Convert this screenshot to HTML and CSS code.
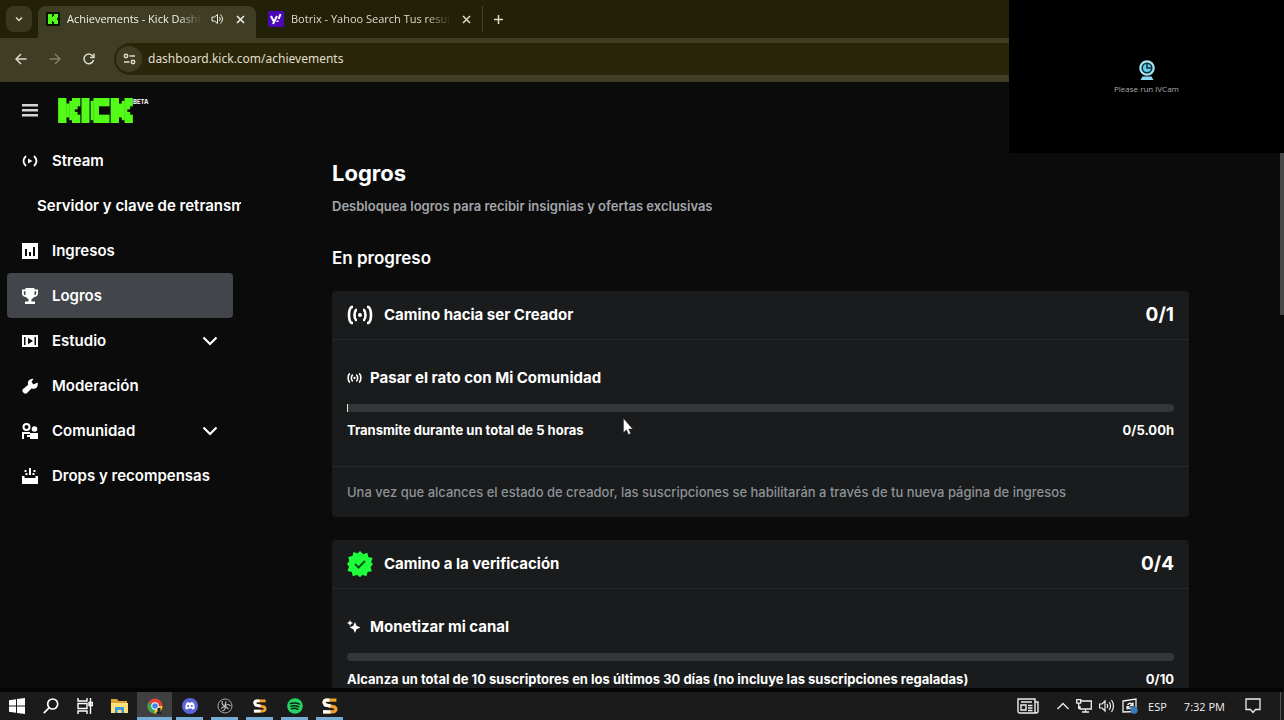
FILE: index.html
```html
<!DOCTYPE html>
<html lang="es">
<head>
<meta charset="utf-8">
<meta name="viewport" content="width=device-width, initial-scale=1">
<title>Achievements - Kick Dashboard</title>
<link rel="stylesheet" href="styles.css">
</head>
<body>
<div class="screen">
  <header class="browser">
    <div class="tabs">
      <button class="tab-menu" aria-label="Buscar pestañas"><svg width="10" height="10" viewBox="0 0 10 10"><path class="line" d="M2 3.5l3 3 3-3"/></svg></button>
      <div class="tab tab-active">
        <svg width="14" height="14" viewBox="0 0 14 14"><rect width="14" height="14" rx="1" fill="#071407"/><path fill="#53fc18" d="M2 2h4v3h1V4h1V2h4v4h-1v2h1v4H8v-2H7V9H6v3H2z"/></svg>
        <span class="tab-title">Achievements - Kick Dashb</span>
        <button class="tab-button" aria-label="Silenciar"><svg width="13" height="12" viewBox="0 0 13 12"><path fill="none" stroke="currentColor" d="M1 4h2.500L6.500 1.500v9L3.500 8H1zM8.500 4q1.500 2 0 4M9.500 1.500q4 4.500 0 9"/></svg></button>
        <button class="tab-button" aria-label="Cerrar"><svg width="9" height="9" viewBox="0 0 9 9"><path class="line" d="M1 1l7 7M8 1L1 8"/></svg></button>
      </div>
      <div class="tab tab-second">
        <svg width="16" height="16" viewBox="0 0 16 16"><rect width="16" height="16" rx="2" fill="#4a08b8"/><path stroke="#fff" stroke-width="2" fill="none" d="M3 5l2.500 5M9 5l-4 8M12.500 3l-1.800 5M9.500 9.500v1.500"/></svg>
        <span class="tab-title">Botrix - Yahoo Search Tus result</span>
        <button class="tab-button" aria-label="Cerrar"><svg width="9" height="9" viewBox="0 0 9 9"><path class="line" d="M1 1l7 7M8 1L1 8"/></svg></button>
      </div>
      <button class="new-tab" aria-label="Nueva pestaña"><svg width="11" height="11" viewBox="0 0 11 11"><path class="line" d="M5.500 1v9M1 5.500h9"/></svg></button>
    </div>
    <div class="toolbar">
      <button class="nav-button" aria-label="Atrás"><svg width="12" height="12" viewBox="0 0 12 12"><path class="line" d="M11.500 6H1M6 1L1 6l5 5"/></svg></button>
      <button class="nav-button" aria-label="Adelante" disabled><svg width="12" height="12" viewBox="0 0 12 12"><path class="line" d="M.5 6H11M6 1l5 5-5 5"/></svg></button>
      <button class="nav-button" aria-label="Recargar"><svg width="12" height="12" viewBox="0 0 12 12"><path class="line" d="M10.500 7A4.800 4.800 0 1 1 10 3.500M11 .5v4H7"/></svg></button>
      <div class="address">
        <button class="site-info" aria-label="Información del sitio"><svg width="13" height="12" viewBox="0 0 13 12"><g class="line"><circle cx="3" cy="3" r="1.700"/><path d="M6.500 3H12M1 9h5.500"/><circle cx="10" cy="9" r="1.700"/></g></svg></button>
        <input class="url" type="text" aria-label="Dirección" value="dashboard.kick.com/achievements">
      </div>
    </div>
  </header>

  <div class="page">
    <aside class="sidebar">
      <div class="brand">
        <button class="burger" aria-label="Menú"><svg width="16" height="14" viewBox="0 0 16 14"><path fill="#d5d5d5" d="M0 1h16v2.500H0zM0 6h16v2.500H0zM0 11h16v2.500H0z"/></svg></button>
        <a class="logo" href="#" aria-label="Kick">
          <svg width="75" height="25" viewBox="0 0 26.900 9" fill="#53fc18">
            <defs><g id="mark"><rect width="3" height="9"/><rect x="2.900" y="2" width="1.200" height="5"/><rect x="4" y="1" width="1.100" height="7"/><rect x="5" width="3" height="3"/><rect x="5" y="2.900" width="2" height="1.200"/><rect x="5" y="4" width="1" height="1.100"/><rect x="5" y="5" width="2" height="1.100"/><rect x="5" y="6" width="3" height="3"/></g></defs>
            <use href="#mark"/><rect x="8.400" width="2.900" height="9"/>
            <rect x="11.700" y="1" width="1.100" height="7"/><rect x="12.700" width="2" height="9"/><rect x="14.600" width="3.900" height="3"/><rect x="14.600" y="6" width="3.900" height="3"/>
            <use href="#mark" x="18.900"/>
          </svg>
          <span class="beta">BETA</span>
        </a>
      </div>
      <nav class="menu">
        <a class="item" href="#"><svg width="16" height="16" viewBox="0 0 16 16"><path fill="none" stroke="#fff" stroke-width="1.800" d="M4 3Q-1 8 4 13M12 3q5 5 0 10"/><path fill="#fff" d="M6 5.500L10.500 8 6 10.500z"/></svg><span>Stream</span></a>
        <a class="item item-sub" href="#"><span>Servidor y clave de retransm</span></a>
        <a class="item" href="#"><svg width="16" height="16" viewBox="0 0 16 16"><path fill="#fff" d="M0 0h16v16H0z"/><path fill="#0b0b0c" d="M3 6h2v7H3zM7 9h2v4H7zM11 4h2v9h-2z"/></svg><span>Ingresos</span></a>
        <a class="item item-active" href="#" aria-current="page"><svg width="16" height="16" viewBox="0 0 16 16"><path fill="#fff" d="M3.500 0h9v1.500H16V6q-.8 3-4 3-.8 1.500-2.500 2v2.500H13V16H3v-2.500h3.500V11Q4.800 10.500 4 9 .8 9 0 6V1.500h3.500z"/><path fill="#42464b" d="M1.800 3.200h1.700v4Q1.800 7 1.800 5.500zM12.500 3.200h1.700v2.300q0 1.500-1.700 1.700z"/></svg><span>Logros</span></a>
        <a class="item" href="#"><svg width="16" height="16" viewBox="0 0 16 16"><path fill="#fff" d="M0 2h16v12H0z"/><path fill="#0b0b0c" d="M2 4h1.500v8H2zM12.500 4H14v8h-1.500zM6 4.800L11 8l-5 3.200z"/></svg><span>Estudio</span><svg class="chevron" width="16" height="10" viewBox="0 0 16 10"><path fill="none" stroke="#fff" stroke-width="2.200" d="M1.500 1.500L8 8l6.500-6.500"/></svg></a>
        <a class="item" href="#"><svg width="16" height="16" viewBox="0 0 16 16"><path fill="#fff" d="M11.500.8L9.500 4l2 2.500 4-2Q16.500 8 14 10q-2 1.300-4.500.6L4.500 15.500H2.200L.5 13.500v-2L6.200 6.800Q5.300 4 7 2.200 9 .3 11.500.8z"/></svg><span>Moderación</span></a>
        <a class="item" href="#"><svg width="16" height="16" viewBox="0 0 16 16"><circle cx="4.500" cy="4" r="3" fill="none" stroke="#fff" stroke-width="2"/><circle cx="12.500" cy="6" r="2.800" fill="#fff"/><path fill="#fff" d="M0 9h8v2H2v5H0zM5 12h3v-2h8v6H8v-2H5z"/></svg><span>Comunidad</span><svg class="chevron" width="16" height="10" viewBox="0 0 16 10"><path fill="none" stroke="#fff" stroke-width="2.200" d="M1.500 1.500L8 8l6.500-6.500"/></svg></a>
        <a class="item" href="#"><svg width="16" height="16" viewBox="0 0 16 16"><path fill="#fff" d="M7 0h2v7H7zM2.500 2h2v2h-2zM11.500 2h2v2h-2zM3.500 5h2v2h-2zM10.500 5h2v2h-2zM0 8h2.500v2h11V8H16v8H0z"/></svg><span>Drops y recompensas</span></a>
      </nav>
    </aside>

    <main class="content">
      <h1>Logros</h1>
      <p class="lead">Desbloquea logros para recibir insignias y ofertas exclusivas</p>
      <h2>En progreso</h2>

      <section class="card">
        <div class="card-head">
          <svg width="26" height="20" viewBox="0 0 26 20"><g fill="none" stroke="#fff" stroke-width="2.600"><path d="M6 2H4.500Q2 4 2 10t2.500 8H6M20 2h1.500Q24 4 24 10t-2.500 8H20M10 5H9Q7.500 6.500 7.500 10T9 15h1M16 5h1q1.500 1.500 1.500 5T17 15h-1"/></g><circle cx="13" cy="10" r="2" fill="#fff"/></svg>
          <h3>Camino hacia ser Creador</h3><strong class="count">0/1</strong>
        </div>
        <div class="goal">
          <h4><svg width="15" height="12" viewBox="0 0 26 20"><g fill="none" stroke="#fff" stroke-width="2.800"><path d="M5 2Q2 4 2 10t3 8M21 2q3 2 3 8t-3 8M10 4Q7.500 6 7.500 10T10 16M16 4q2.500 2 2.500 6T16 16"/></g><circle cx="13" cy="10" r="2" fill="#fff"/></svg>Pasar el rato con Mi Comunidad</h4>
          <div class="bar" role="progressbar" aria-label="Horas transmitidas" aria-valuenow="0" aria-valuemax="5"><div class="bar-fill"></div></div>
          <div class="goal-row"><span>Transmite durante un total de 5 horas</span><span>0/5.00h</span></div>
        </div>
        <p class="note">Una vez que alcances el estado de creador, las suscripciones se habilitarán a través de tu nueva página de ingresos</p>
      </section>

      <section class="card">
        <div class="card-head">
          <svg width="26" height="26" viewBox="0 0 26 26"><path fill="#1eff3c" d="M13 0l3.100 3.200 4.200-1.400 1 4.300 4.300 1-1.500 4.200L26 13l-2.400 3 1.200 4.200-4.300.9-1.100 4.200-4-1.500L13 26.300l-3-2.500-4.200 1.400-1-4.300-4.300-1 1.500-4.200L0 13l2.300-3L1.200 6l4.300-1L6.600.9l4 1.600z"/><path fill="none" stroke="#075214" stroke-width="2" d="M8 13l3.500 3.500L18 10"/></svg>
          <h3>Camino a la verificación</h3><strong class="count">0/4</strong>
        </div>
        <div class="goal">
          <h4><svg width="15" height="14" viewBox="0 0 15 14"><path fill="#fff" d="M8 2l1.500 3.800L13.500 7.500 9.500 9.200 8 13 6.300 9.200 2.500 7.500l3.800-1.700zM3 0l.9 2L6 3l-2.100.9L3 6l-.9-2.100L0 3l2.100-1z"/></svg>Monetizar mi canal</h4>
          <div class="bar" role="progressbar" aria-label="Suscriptores" aria-valuenow="0" aria-valuemax="10"></div>
          <div class="goal-row"><span>Alcanza un total de 10 suscriptores en los últimos 30 días (no incluye las suscripciones regaladas)</span><span>0/10</span></div>
        </div>
      </section>
    </main>
    <div class="scrollbar"><div class="thumb"></div></div>
  </div>

  <footer class="taskbar">
    <div class="launchers">
      <div class="system-apps">
        <button class="app" aria-label="Inicio"><svg width="16" height="16" viewBox="0 0 16 16"><path fill="#fff" d="M0 2.200l7-1v6.300H0zM8 1l8-1v7.500H8zM0 8.500h7v6.300l-7-1zM8 8.500h8V16l-8-1z"/></svg></button>
        <button class="app" aria-label="Buscar"><svg width="16" height="16" viewBox="0 0 16 16"><g fill="none" stroke="#fff" stroke-width="1.700"><circle cx="9.700" cy="6" r="5"/><path d="M6 9.800L.8 15.200"/></g></svg></button>
        <button class="app" aria-label="Vista de tareas"><svg width="16" height="16" viewBox="0 0 16 16"><path fill="none" stroke="#fff" stroke-width="1.400" d="M1 0v3h9V0M1 16v-3h9v3M1 5.500h9v5H1zM13.500 0v16M12 4.500h3.500v3H12z"/></svg></button>
      </div>
      <button class="app" aria-label="Explorador"><svg width="17" height="14" viewBox="0 0 17 14"><path fill="#dca532" d="M0 0h6l1.500 2H16v12H0z"/><path fill="#ffe07a" d="M0 4h17v10H0z"/><path fill="#3c9bda" d="M4 8h9v6h-2.500v-3h-4v3H4z"/></svg></button>
      <button class="app app-open app-current" aria-label="Chrome"><svg width="16" height="16" viewBox="0 0 16 16"><circle cx="8" cy="8" r="7.500" fill="#e24236"/><path fill="#37a653" d="M8 8L1.400 4.300A7.500 7.500 0 0 0 7.800 15.500z"/><path fill="#fbc928" d="M8 8h7.500a7.500 7.500 0 0 1-8 7.500z"/><circle cx="8" cy="8" r="3.700" fill="#fff"/><circle cx="8" cy="8" r="2.800" fill="#4285f4"/><path fill="#20252c" d="M9.500 16v-2q2.500-2 5 0v2zM10.500 10h3v3h-3z"/></svg></button>
      <button class="app app-open" aria-label="Discord"><svg width="16" height="16" viewBox="0 0 16 16"><circle cx="8" cy="8" r="8" fill="#5b63d8"/><path fill="#fff" d="M4.500 4.800l2-.8.5.8h2l.5-.8 2 .8q1.500 2.500 1.300 5.700l-2.300 1.200-.7-1.200H6.200l-.7 1.200-2.300-1.200Q3 7.300 4.500 4.800z"/><circle cx="6.200" cy="8" r="1.100" fill="#5b63d8"/><circle cx="9.800" cy="8" r="1.100" fill="#5b63d8"/></svg></button>
      <button class="app app-open" aria-label="OBS"><svg width="16" height="16" viewBox="0 0 16 16"><circle cx="8" cy="8" r="7" fill="#17171a" stroke="#aaa" stroke-width="1"/><path fill="none" stroke="#bbb" stroke-width="1.200" d="M8 8Q4 7 5.500 3M8 8q3-3 5.500 0M8 8q1 4-3 5M8 8L4 10.500M8 8l1-4.500M8 8l3.500 3"/></svg></button>
      <button class="app app-open" aria-label="Streamster"><svg width="14" height="14" viewBox="0 0 15 15"><path fill="none" stroke="#f5a02c" stroke-width="3" d="M13.500 2H4.500Q1.500 2 2 4.500L3 6.500l9 2q1.500 1 .8 3Q12 13 10.500 13H1"/><path fill="none" stroke="#fff" stroke-width="3" d="M7 2H4.500Q1.500 2 2 4.500L3 6.500l5 1.100M1 13h7"/></svg></button>
      <button class="app app-open" aria-label="Spotify"><svg width="16" height="16" viewBox="0 0 16 16"><circle cx="8" cy="8" r="7.800" fill="#24d462"/><path fill="none" stroke="#0b2413" stroke-width="1.500" stroke-linecap="round" d="M3.500 5.500q5-1.500 9 .7M4 8.200q4.200-1.200 7.800.6M4.500 10.700q3.500-.9 6.300.6"/></svg></button>
      <button class="app app-open" aria-label="Streamster chat"><svg width="16" height="16" viewBox="0 0 15 15"><path fill="none" stroke="#f5a02c" stroke-width="3" d="M13.500 2H4.500Q1.500 2 2 4.500L3 6.500l9 2q1.500 1 .8 3Q12 13 10.500 13H1"/><path fill="none" stroke="#fff" stroke-width="3" d="M7 2H4.500Q1.500 2 2 4.500L3 6.500l5 1.100M1 13h7"/></svg></button>
    </div>
    <div class="tray">
      <button class="tray-news" aria-label="Noticias"><svg width="22" height="16" viewBox="0 0 22 16"><path fill="none" stroke="#eee" stroke-width="1.400" d="M1 1h17v14H3q-2 0-2-2zM18 4h3v9q0 2-2 2h-1M4 7h5v5H4zM4 4h11M11 7.500h4.500M11 10h4.500M11 12.500h4.500"/></svg></button>
      <div class="tray-icons">
        <button aria-label="Iconos ocultos"><svg width="12" height="8" viewBox="0 0 12 8"><path fill="none" stroke="#eee" stroke-width="1.300" d="M.5 7L6 1.500 11.500 7"/></svg></button>
        <button aria-label="Red"><svg width="16" height="14" viewBox="0 0 16 14"><path fill="none" stroke="#eee" stroke-width="1.300" d="M5 2h10.300v8H4V7M9.500 10v3M6 13h7M.7.700h4v3.500h-4zM2.700 4v6"/></svg></button>
        <button aria-label="Volumen"><svg width="16" height="14" viewBox="0 0 16 14"><path fill="none" stroke="#eee" stroke-width="1.200" d="M.6 5h2.500L6 2v10L3.100 9H.6zM8 5q1.300 2 0 4M10.200 3q2.600 4 0 8M12.500 1q4 6 0 12"/></svg></button>
        <button aria-label="Actualización"><svg width="16" height="16" viewBox="0 0 16 16"><path fill="none" stroke="#eee" stroke-width="1.300" d="M1 3l13-2v12.500L1 14zM11 4.500v3H8M11 7q-3-3.500-5.500 0M5 11.500V8.700h2.500M5.500 9.500q2 2 4 0"/><circle cx="12" cy="12" r="3.700" fill="#3b7cb8"/></svg></button>
      </div>
      <span class="lang">ESP</span>
      <time class="clock">7:32 PM</time>
      <button class="notices" aria-label="Notificaciones"><svg width="16" height="16" viewBox="0 0 16 16"><path fill="none" stroke="#eee" stroke-width="1.300" d="M1 1h14v10.500h-4.500L8 14.500l-2.500-3H1z"/></svg></button>
      <div class="show-desktop"></div>
    </div>
  </footer>

  <div class="camera">
    <svg width="16" height="21" viewBox="0 0 16 21"><circle cx="8" cy="8" r="6.700" fill="#12303a" stroke="#a4e4f5" stroke-width="2.200"/><circle cx="8" cy="8" r="4" fill="#62cdec"/><path stroke="#12303a" stroke-width="1.500" d="M8 4v4h4" fill="none"/><path fill="#8bdcf2" d="M3.500 16.500h9l2 3.500h-13z"/></svg>
    <span>Please run iVCam</span>
  </div>
  <svg class="cursor" width="10" height="17" viewBox="0 0 10 17"><path fill="#fff" stroke="#333" stroke-width=".5" d="M.5.5v14l3-2.700 2 4.700 2.200-1-2-4.500h4z"/></svg>
</div>
</body>
</html>
```
FILE: styles.css
```css
* { box-sizing: border-box; }
body { margin: 0; background: #0b0b0c; color: #fff; font-family: Inter, "Liberation Sans", sans-serif; }
button { display: flex; align-items: center; justify-content: center; flex: none; margin: 0; padding: 0; border: 0; background: none; color: inherit; font: inherit; }
a { color: inherit; text-decoration: none; }
svg { display: block; flex: none; }
h1, h2, h3, h4, p { margin: 0; }
.line { fill: none; stroke: currentColor; stroke-width: 1.5; }

.screen { position: relative; display: flex; flex-direction: column; height: 100vh; overflow: hidden; }

/* Browser chrome */
.browser { flex: none; background: #222006; color: #dedccb; font-family: "Open Sans", "Noto Sans", sans-serif; }
.tabs { display: flex; height: 38px; padding: 6px 6px 0; }
.tab-menu { width: 26px; height: 26px; margin-right: 6px; border-radius: 8px; background: #3a371e; }
.tab { display: flex; align-items: center; width: 218px; height: 32px; padding: 0 8px 6px; }
.tab-active { border-radius: 8px 8px 0 0; background: #3f3d23; color: #f3f2e8; }
.tab-second { width: 226px; padding-left: 12px; }
.tab-title { flex: 1; min-width: 0; margin-left: 7px; font-size: 11px; line-height: 16px; white-space: nowrap; -webkit-mask-image: linear-gradient(to left, transparent, #000 24px); mask-image: linear-gradient(to left, transparent, #000 24px); }
.tab-button { width: 15px; height: 16px; margin-left: 8px; }
.new-tab { width: 32px; height: 26px; border-left: 1px solid #45422a; }
.toolbar { display: flex; align-items: center; height: 44px; padding: 0 0 2px 4px; background: #3f3d23; }
.nav-button { width: 34px; height: 34px; }
.nav-button:disabled { color: #807d66; }
.address { display: flex; flex: 1; align-items: center; height: 32px; margin-left: 8px; padding-left: 2px; border-radius: 16px 0 0 16px; background: #292609; }
.site-info { width: 26px; height: 26px; border-radius: 50%; background: #3f3d23; }
.url { flex: 1; min-width: 0; margin-left: 6px; padding: 0; border: 0; outline: 0; background: none; color: #e0dece; font: 12px/20px "Noto Sans", "Open Sans", sans-serif; }

/* Dashboard */
.page { display: flex; flex: 1; min-height: 0; overflow: hidden; border-bottom: 4px solid #050505; }
.sidebar { flex: none; width: 241px; }
.brand { display: flex; align-items: center; height: 56px; padding-left: 22px; }
.logo { display: flex; margin-left: 20px; }
.beta { font-size: 6px; line-height: 7px; font-weight: 700; }
.item { display: flex; align-items: center; height: 45px; margin: 0 8px 0 7px; padding: 0 15px; border-radius: 4px; font-size: 15px; line-height: 20px; font-weight: 600; white-space: nowrap; }
.item span { margin-left: 14px; }
.item-sub { margin-right: 0; padding-right: 0; }
.item-sub span { margin-left: 15px; overflow: hidden; }
.item-active { background: #42464b; }
.chevron { margin-left: auto; }
.content { flex: 1; min-width: 0; padding: 76px 91px 0; }
h1 { font-size: 22px; line-height: 30px; font-weight: 700; }
.lead { margin-top: 8px; color: #a3a6aa; font-size: 13px; line-height: 20px; font-weight: 600; }
h2 { margin-top: 30px; font-size: 17px; line-height: 24px; font-weight: 600; }
.card { margin-top: 21px; border-radius: 4px; background: #191b1c; }
.card-head { display: flex; align-items: center; height: 49px; padding: 0 15px; border-bottom: 1px solid #26292b; }
h3 { margin-left: 11px; font-size: 15px; line-height: 24px; font-weight: 700; }
.count { margin-left: auto; font-size: 19px; line-height: 24px; font-weight: 700; }
.goal { padding: 26px 15px; }
h4 { display: flex; align-items: center; gap: 8px; font-size: 15px; line-height: 24px; font-weight: 700; }
.bar { height: 8px; margin-top: 14px; overflow: hidden; border-radius: 4px; background: #343638; }
.bar-fill { width: 1px; height: 100%; background: #d8ecd8; }
.bar:has(.bar-fill) { border-radius: 0 4px 4px 0; }
.goal-row { display: flex; justify-content: space-between; margin-top: 8px; font-size: 13px; line-height: 20px; font-weight: 700; }
.note { padding: 15px; border-top: 1px solid #26292b; color: #8c9297; font-size: 13px; line-height: 20px; font-weight: 500; }
.card + .card { margin-top: 23px; }
.scrollbar { flex: none; width: 4px; padding-top: 71px; }
.thumb { height: 162px; background: #484848; }

/* Taskbar */
.taskbar { display: flex; flex: none; justify-content: space-between; height: 28px; background: #1b1b1c; color: #f0f0f0; font-family: "Open Sans", "Noto Sans", sans-serif; font-size: 11px; }
.launchers, .system-apps { display: flex; }
.app { width: 35px; }
.system-apps .app { width: 34px; }
.app-open { background: linear-gradient(#76add6, #76add6) center bottom / 27px 3px no-repeat; }
.app-current { background: linear-gradient(#76add6, #76add6) center bottom / 35px 3px no-repeat, #404041; }
.tray { display: flex; align-items: center; padding-right: 3px; }
.tray-icons { display: flex; gap: 7px; margin: 0 10px 0 18px; }
.clock { margin: 0 20px 0 17px; }
.show-desktop { align-self: stretch; width: 1px; margin-left: 19px; background: #555; }

/* Floating layers */
.camera { position: absolute; top: 0; right: 0; display: flex; flex-direction: column; align-items: center; justify-content: center; gap: 3px; width: 275px; height: 153px; background: #000; color: #aaa; font: 8px/10px "Open Sans", sans-serif; }
.cursor { position: absolute; top: 418px; left: 623px; }
```
